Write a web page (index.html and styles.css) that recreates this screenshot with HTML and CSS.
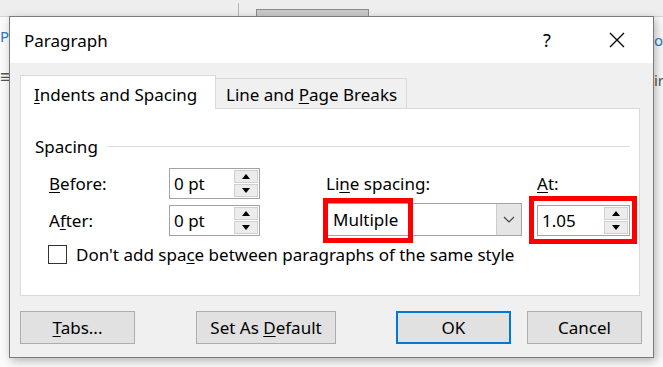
FILE: index.html
```html
<!DOCTYPE html>
<html>
<head>
<meta charset="utf-8">
<link rel="stylesheet" href="styles.css">
</head>
<body>
<div class="app">
  <div class="ribbon">
    <span class="ribbon-line"></span>
    <span class="ribbon-thumb"></span>
  </div>
  <div class="app-main">
    <div class="side-left">
      <span class="frag-blue">Pi</span>
      <span class="frag-lines">≡</span>
    </div>
    <div class="side-right">
      <span class="frag-blue">o</span>
      <span class="frag-gray">ir</span>
    </div>
  </div>
</div>

<div class="dialog">
  <div class="titlebar">
    <span class="title">Paragraph</span>
    <span class="tb-btn help">?</span>
    <span class="tb-btn close">
      <svg width="16" height="16" viewBox="0 0 16 16"><path d="M1 1 L15 15 M15 1 L1 15" stroke="#000" stroke-width="1.3" fill="none"/></svg>
    </span>
  </div>
  <div class="dlg-body">
    <div class="tabs">
      <div class="tab tab-active"><span><u>I</u>ndents and Spacing</span></div>
      <div class="tab tab-inactive"><span>Line and <u>P</u>age Breaks</span></div>
    </div>
    <div class="panel">
      <div class="group-head"><span>Spacing</span><span class="rule"></span></div>
      <div class="grid">
        <div class="lbl"><span><u>B</u>efore:</span></div>
        <div class="cell"><div class="spin w91"><span class="val">0 pt</span><span class="spin-btns"><span class="sb"><i class="up"></i></span><span class="sb"><i class="down"></i></span></span></div></div>
        <div class="lbl"><span>Li<u>n</u>e spacing:</span></div>
        <div class="lbl"><span><u>A</u>t:</span></div>

        <div class="lbl"><span>A<u>f</u>ter:</span></div>
        <div class="cell"><div class="spin w91"><span class="val">0 pt</span><span class="spin-btns"><span class="sb"><i class="up"></i></span><span class="sb"><i class="down"></i></span></span></div></div>
        <div class="cell"><div class="combo"><span class="val">Multiple</span><span class="drop"><svg width="12" height="7" viewBox="0 0 12 7"><path d="M1 1 L6 6 L11 1" stroke="#444" stroke-width="1.2" fill="none"/></svg></span></div></div>
        <div class="cell"><div class="spin w93"><span class="val">1.05</span><span class="spin-btns"><span class="sb"><i class="up"></i></span><span class="sb"><i class="down"></i></span></span></div></div>
      </div>
      <label class="check"><span class="box"></span><span>Don't add spa<u>c</u>e between paragraphs of the same style</span></label>
      <span class="mark mark-1"></span>
      <span class="mark mark-2"></span>
    </div>
    <div class="buttons">
      <span class="btn btn-tabs"><span><u>T</u>abs...</span></span>
      <span class="btn btn-default"><span>Set As <u>D</u>efault</span></span>
      <span class="btn btn-ok"><span>OK</span></span>
      <span class="btn btn-cancel"><span>Cancel</span></span>
    </div>
  </div>
</div>
</body>
</html>
```
FILE: styles.css
```css
* { box-sizing: border-box; }
html, body { margin: 0; padding: 0; }
body {
  width: 663px;
  height: 367px;
  overflow: hidden;
  position: relative;
  background: #ffffff;
  font-family: "Noto Sans", "Open Sans", sans-serif;
  font-size: 17px;
  color: #000;
}
u { text-decoration: underline; text-underline-offset: 2px; text-decoration-thickness: 1px; }

/* background application */
.app { height: 100%; display: flex; flex-direction: column; }
.ribbon {
  height: 17px;
  background: #eeeeee;
  border-bottom: 1px solid #d2d2d2;
  display: flex;
  align-items: flex-end;
  padding-left: 238px;
}
.ribbon-line { width: 1px; height: 13px; background: #b5b5b5; }
.ribbon-thumb {
  margin-left: 17px;
  width: 113px;
  height: 7px;
  background: #c9c9c9;
  border: 1px solid #8c8c8c;
  border-bottom: none;
}
.app-main { flex: 1; display: flex; justify-content: space-between; background: #fafafa; }
.side-left { display: flex; flex-direction: column; padding-top: 9px; width: 9px; }
.side-right { display: flex; flex-direction: column; padding-top: 13px; width: 9px; }
.frag-blue { color: #2b78c5; font-size: 15px; line-height: 20px; }
.frag-lines { color: #555; font-size: 18px; line-height: 24px; margin-top: 18px; }
.frag-gray { color: #555; font-size: 15px; line-height: 20px; margin-top: 20px; }

/* dialog */
.dialog {
  position: absolute;
  left: 9px;
  top: 16px;
  width: 645px;
  height: 342px;
  border: 1px solid #7a7a7a;
  background: #f0f0f0;
  box-shadow: 2px 3px 9px rgba(0,0,0,0.28);
  display: flex;
  flex-direction: column;
}
.titlebar {
  height: 46px;
  background: #fff;
  display: flex;
  align-items: center;
  padding-left: 14px;
  padding-right: 13px;
}
.tb-btn { width: 46px; height: 46px; display: flex; align-items: center; justify-content: center; }
.help { margin-left: auto; margin-right: 24px; font-size: 18px; }

.dlg-body { flex: 1; padding: 12px 13px 0 10px; display: flex; flex-direction: column; }

.tabs { display: flex; align-items: flex-end; height: 33px; }
.tab {
  display: flex;
  align-items: center;
  border: 1px solid #d9d9d9;
  border-bottom: none;
}
.tab-active {
  width: 196px;
  height: 34px;
  margin-bottom: -1px;
  background: #fff;
  padding-left: 13px;
  padding-top: 3px;
  position: relative;
  z-index: 1;
}
.tab-inactive {
  width: 192px;
  height: 30px;
  margin-left: -1px;
  background: #f0f0f0;
  padding-left: 10px;
  padding-top: 2px;
}

.panel {
  position: relative;
  width: 620px;
  height: 188px;
  background: #fff;
  border: 1px solid #d9d9d9;
  padding: 26px 0 0 0;
}
.group-head {
  display: flex;
  align-items: center;
  height: 22px;
  padding-left: 14px;
  padding-right: 9px;
}
.rule { flex: 1; height: 1px; background: #dcdcdc; margin-left: 9px; }

.grid {
  display: grid;
  grid-template-columns: 120px 157px 211px 93px;
  grid-template-rows: 31px 31px;
  row-gap: 6px;
  margin-top: 11px;
  padding-left: 28px;
}
.lbl { display: flex; align-items: center; }
.cell { display: flex; align-items: center; }

.spin {
  height: 31px;
  border: 1px solid #a3a3a3;
  background: #fff;
  display: flex;
  align-items: stretch;
}
.w91 { width: 91px; }
.w93 { width: 93px; }
.val { flex: 1; display: flex; align-items: center; padding-left: 4px; }
.spin-btns { width: 25px; display: flex; flex-direction: column; gap: 1px; padding: 1px 1px 1px 0; }
.sb {
  flex: 1;
  background: #ececec;
  border: 1px solid #d0d0d0;
  display: flex;
  align-items: center;
  justify-content: center;
}
.up { width: 0; height: 0; border-left: 4px solid transparent; border-right: 4px solid transparent; border-bottom: 5px solid #000; }
.down { width: 0; height: 0; border-left: 4px solid transparent; border-right: 4px solid transparent; border-top: 5px solid #000; }

.combo {
  width: 196px;
  height: 33px;
  border: 1px solid #a3a3a3;
  background: #fff;
  display: flex;
  align-items: stretch;
  margin-top: -2px;
}
.combo .val { padding-left: 6px; }
.drop {
  width: 25px;
  background: #e5e5e5;
  border-left: 1px solid #cccccc;
  display: flex;
  align-items: center;
  justify-content: center;
}

.check { display: flex; align-items: center; gap: 9px; margin-top: 8px; padding-left: 27px; height: 20px; }
.box { width: 19px; height: 19px; border: 1px solid #333; background: #fff; flex: none; }

.mark { position: absolute; border: 5px solid #ff0000; }
.mark-1 { left: 302px; top: 89px; width: 90px; height: 45px; }
.mark-2 { left: 508px; top: 87px; width: 108px; height: 48px; }

.buttons { display: flex; margin-top: 15px; margin-right: -2px; }
.btn {
  height: 33px;
  width: 115px;
  background: #e1e1e1;
  border: 1px solid #adadad;
  display: flex;
  align-items: center;
  justify-content: center;
}
.btn-default { width: 140px; margin-left: 61px; }
.btn-ok { margin-left: auto; border: 2px solid #0078d7; }
.btn-cancel { margin-left: 16px; }
```
